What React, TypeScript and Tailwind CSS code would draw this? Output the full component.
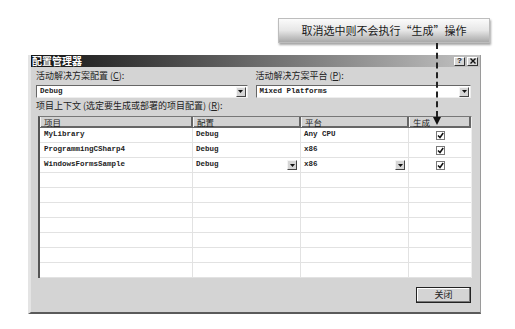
import React from "react";

const cjk = { fontFamily: '"Noto Sans CJK SC", "Noto Sans", sans-serif' };
const mono = { fontFamily: '"Liberation Mono", "DejaVu Sans Mono", monospace' };

function DropBtn({ size = 10 }: { size?: number }) {
  return (
    <div
      className="flex items-center justify-center bg-[#d6d6d6] border border-t-[#f4f4f4] border-l-[#f4f4f4] border-r-[#444] border-b-[#444] shrink-0"
      style={{ width: size, height: size }}
    >
      <svg width="5" height="3" viewBox="0 0 5 3">
        <path d="M0 0 H5 L2.5 3 Z" fill="#111" />
      </svg>
    </div>
  );
}

function Check() {
  return (
    <div className="w-[9px] h-[9px] border border-[#777] bg-white flex items-center justify-center">
      <svg width="7" height="7" viewBox="0 0 7 7">
        <path d="M1 3.5 L3 5.5 L6.2 1" stroke="#111" strokeWidth="1.5" fill="none" />
      </svg>
    </div>
  );
}

const cols = "grid grid-cols-[153px_108px_108px_62px]";

const rows: { name: string; cfg: string; plat: string; dd?: boolean }[] = [
  { name: "MyLibrary", cfg: "Debug", plat: "Any CPU" },
  { name: "ProgrammingCSharp4", cfg: "Debug", plat: "x86" },
  { name: "WindowsFormsSample", cfg: "Debug", plat: "x86", dd: true },
];

export default function App() {
  const empty = Array.from({ length: 7 });
  return (
    <div className="relative w-[515px] h-[329px] bg-white overflow-hidden">
      {/* callout */}
      <div className="pt-[18px] pl-[278px]">
        <div
          className="w-[212px] h-[25px] flex items-center justify-center text-[11px] text-[#1a1a1a] border border-[#bdbdbd] bg-gradient-to-b from-[#fbfbfb] via-[#e6e6e6] to-[#a9a9a9] shadow-[1px_2px_2px_rgba(0,0,0,0.35)]"
          style={cjk}
        >
          取消选中则不会执行“生成”操作
        </div>
      </div>

      {/* dialog */}
      <div className="ml-[28px] mt-[12px] w-[453px] h-[259px] bg-[#d4d4d4] border-l-[3px] border-l-[#e4e4e4] border-b-2 border-b-[#5a5a5a] border-r border-r-[#9a9a9a] flex flex-col">
        <div className="h-[12px] flex items-center justify-between bg-gradient-to-r from-[#151515] via-[#6a6a6a] to-[#c4c4c4] pl-[1px] pr-[2px]">
          <span className="text-white font-bold text-[10px] leading-[12px]" style={cjk}>
            配置管理器
          </span>
          <div className="flex gap-[2px]">
            <div className="w-[11px] h-[9px] bg-[#d6d6d6] border border-t-white border-l-white border-r-[#333] border-b-[#333] flex items-center justify-center text-[8px] leading-none font-bold text-[#222]" style={{ fontFamily: '"Liberation Sans", sans-serif' }}>
              ?
            </div>
            <div className="w-[11px] h-[9px] bg-[#d6d6d6] border border-t-white border-l-white border-r-[#333] border-b-[#333] flex items-center justify-center">
              <svg width="6" height="6" viewBox="0 0 6 6">
                <path d="M0.5 0.5 L5.5 5.5 M5.5 0.5 L0.5 5.5" stroke="#111" strokeWidth="1.4" />
              </svg>
            </div>
          </div>
        </div>

        <div className="flex-1 pl-[5px] pr-[9px] pt-[1px] flex flex-col">
          <div className="flex gap-[8px]">
            <div className="w-[212px] flex flex-col">
              <div className="h-[15px] leading-[15px] text-[9px] text-[#222]" style={cjk}>
                活动解决方案配置 (<span className="underline">C</span>):
              </div>
              <div className="mt-[2px] h-[13px] bg-white border border-t-[#666] border-l-[#666] border-r-[#eee] border-b-[#eee] flex items-center justify-between pl-[3px] pr-[1px]">
                <span className="text-[7.5px] font-bold text-[#222]" style={mono}>Debug</span>
                <DropBtn />
              </div>
            </div>
            <div className="w-[216px] flex flex-col">
              <div className="h-[15px] leading-[15px] text-[9px] text-[#222]" style={cjk}>
                活动解决方案平台 (<span className="underline">P</span>):
              </div>
              <div className="mt-[2px] h-[13px] bg-white border border-t-[#666] border-l-[#666] border-r-[#eee] border-b-[#eee] flex items-center justify-between pl-[3px] pr-[1px]">
                <span className="text-[7.5px] font-bold text-[#222]" style={mono}>Mixed Platforms</span>
                <DropBtn />
              </div>
            </div>
          </div>

          <div className="h-[15px] leading-[15px] text-[9px] text-[#222]" style={cjk}>
            项目上下文 (选定要生成或部署的项目配置) (<span className="underline">R</span>):
          </div>

          <div className="mt-[3px] ml-[2px] w-[434px] bg-white border-l-2 border-t border-l-[#555] border-t-[#777] border-r border-r-[#eee]">
            <div className={`${cols} h-[11px] bg-[#d2d2d2] border-b-2 border-b-[#666]`}>
              {["项目", "配置", "平台"].map((h) => (
                <div key={h} className="border-r-2 border-r-[#666] border-l border-l-[#f2f2f2] pl-[3px] text-[8.5px] leading-[10px] text-[#222]" style={cjk}>
                  {h}
                </div>
              ))}
              <div className="border-r-2 border-r-[#666] border-l border-l-[#f2f2f2] pl-[3px] flex items-center text-[8.5px] leading-[10px] text-[#222]" style={cjk}>
                生成
              </div>
            </div>
            {rows.map((r) => (
              <div key={r.name} className={`${cols} h-[15px] border-b border-b-[#e2e2e2]`}>
                <div className="border-r border-r-[#e2e2e2] pl-[4px] flex items-center text-[7.5px] font-bold text-[#222]" style={mono}>
                  {r.name}
                </div>
                <div className="border-r border-r-[#e2e2e2] pl-[3px] pr-[3px] flex items-center justify-between text-[7.5px] font-bold text-[#222]" style={mono}>
                  <span>{r.cfg}</span>
                  {r.dd && <DropBtn size={10} />}
                </div>
                <div className="border-r border-r-[#e2e2e2] pl-[3px] pr-[3px] flex items-center justify-between text-[7.5px] font-bold text-[#222]" style={mono}>
                  <span>{r.plat}</span>
                  {r.dd && <DropBtn size={10} />}
                </div>
                <div className="flex items-center justify-center">
                  <Check />
                </div>
              </div>
            ))}
            {empty.map((_, i) => (
              <div key={i} className={`${cols} h-[15px] border-b border-b-[#e2e2e2]`}>
                <div className="border-r border-r-[#e2e2e2]" />
                <div className="border-r border-r-[#e2e2e2]" />
                <div className="border-r border-r-[#e2e2e2]" />
                <div />
              </div>
            ))}
          </div>

          <div className="flex justify-end mt-[9px]">
            <div className="w-[55px] h-[16px] bg-[#d4d4d4] border border-[#222] shadow-[inset_-1px_-1px_0_#777,inset_1px_1px_0_#fff] flex items-center justify-center text-[9px] text-[#222]" style={cjk}>
              关闭
            </div>
          </div>
        </div>
      </div>

      {/* dashed pointer line */}
      <div className="absolute left-[436px] top-[43px] h-[74px] border-l-2 border-dashed border-l-[#222]" />
      <svg className="absolute left-[433px] top-[117px]" width="8" height="8" viewBox="0 0 8 8">
        <path d="M0 0 H8 L4 8 Z" fill="#111" />
      </svg>
    </div>
  );
}
